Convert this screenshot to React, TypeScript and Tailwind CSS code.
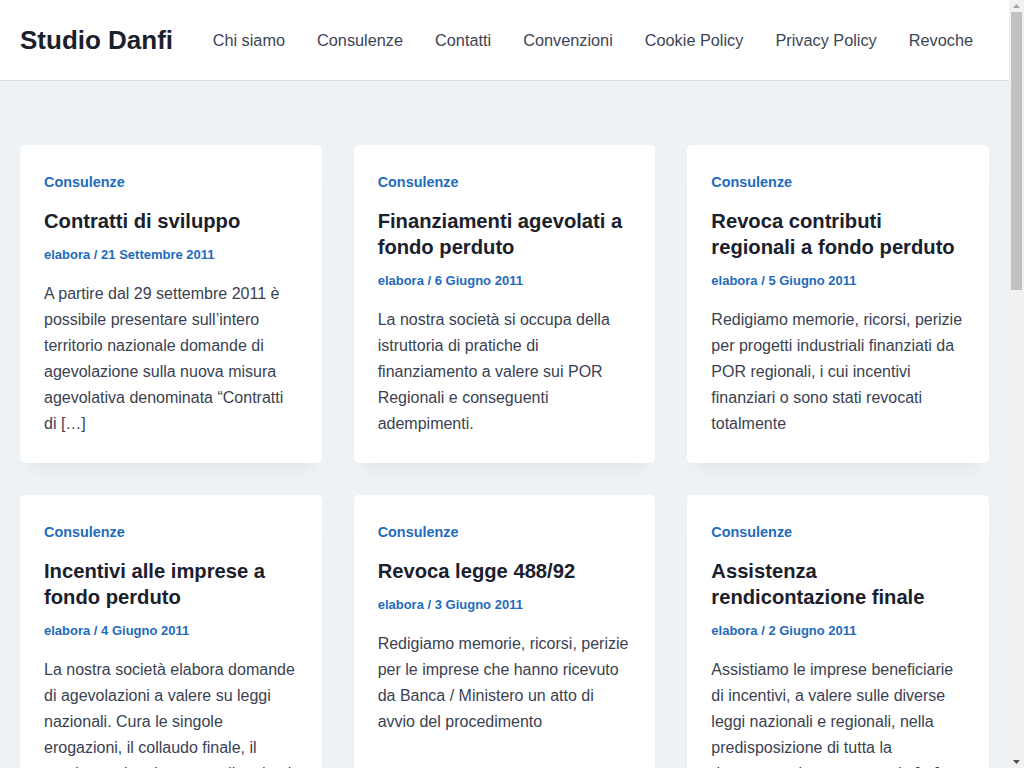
import React from 'react';

interface Post {
  title: string;
  date: string;
  excerpt: string;
}

const navItems = ['Chi siamo', 'Consulenze', 'Contatti', 'Convenzioni', 'Cookie Policy', 'Privacy Policy', 'Revoche'];

const posts: Post[] = [
  {
    title: 'Contratti di sviluppo',
    date: '21 Settembre 2011',
    excerpt:
      'A partire dal 29 settembre 2011 è possibile presentare sull’intero territorio nazionale domande di agevolazione sulla nuova misura agevolativa denominata “Contratti di […]',
  },
  {
    title: 'Finanziamenti agevolati a fondo perduto',
    date: '6 Giugno 2011',
    excerpt:
      'La nostra società si occupa della istruttoria di pratiche di finanziamento a valere sui POR Regionali e conseguenti adempimenti.',
  },
  {
    title: 'Revoca contributi regionali a fondo perduto',
    date: '5 Giugno 2011',
    excerpt:
      'Redigiamo memorie, ricorsi, perizie per progetti industriali finanziati da POR regionali, i cui incentivi finanziari o sono stati revocati totalmente',
  },
  {
    title: 'Incentivi alle imprese a fondo perduto',
    date: '4 Giugno 2011',
    excerpt:
      'La nostra società elabora domande di agevolazioni a valere su leggi nazionali. Cura le singole erogazioni, il collaudo finale, il monitoraggio e le eventuali varianti […]',
  },
  {
    title: 'Revoca legge 488/92',
    date: '3 Giugno 2011',
    excerpt:
      'Redigiamo memorie, ricorsi, perizie per le imprese che hanno ricevuto da Banca / Ministero un atto di avvio del procedimento',
  },
  {
    title: 'Assistenza rendicontazione finale',
    date: '2 Giugno 2011',
    excerpt:
      'Assistiamo le imprese beneficiarie di incentivi, a valere sulle diverse leggi nazionali e regionali, nella predisposizione di tutta la documentazione necessaria […]',
  },
];

const PostCard: React.FC<{ post: Post }> = ({ post }) => (
  <article className="bg-white rounded-[5px] shadow-[0_15px_15px_-10px_rgba(0,0,0,0.06)] px-6 pt-6 pb-[26px]">
    <a className="block text-[14.4px] leading-[26px] font-bold text-[#1f6bbd]">Consulenze</a>
    <h2 className="mt-[13px] text-[20.2px] leading-[26px] font-bold text-[#1a202c]">{post.title}</h2>
    <div className="mt-[10px] text-[13px] leading-[21px] font-bold text-[#1f6bbd]">
      elabora / {post.date}
    </div>
    <p className="mt-4 text-[16px] leading-[26px] text-[#3a4252]">{post.excerpt}</p>
  </article>
);

// browser scrollbar as seen in the screenshot
const ScrollBar: React.FC = () => (
  <div className="w-[15px] h-screen shrink-0 bg-[#f1f1f1] flex flex-col items-center">
    <div className="h-[12px] w-full flex items-center justify-center">
      <svg width="7" height="4" viewBox="0 0 7 4">
        <path d="M3.5 0 L7 4 L0 4 Z" fill="#a3a3a3" />
      </svg>
    </div>
    <div className="w-[11px] h-[278px] bg-[#c1c1c1]" />
    <div className="flex-1" />
    <div className="h-[12px] w-full flex items-center justify-center">
      <svg width="7" height="4" viewBox="0 0 7 4">
        <path d="M0 0 L7 0 L3.5 4 Z" fill="#505050" />
      </svg>
    </div>
  </div>
);

export default function App() {
  return (
    <div className="h-screen flex overflow-hidden bg-[#edf2f7] font-['Liberation_Sans',Arial,sans-serif]">
      <div className="flex-1 min-w-0 h-screen overflow-hidden">
        <header className="h-[81px] bg-white border-b border-[#d6dbe1] flex items-center justify-between pl-5 pr-5">
          <div className="text-[26px] font-bold text-[#1a202c]">Studio Danfi</div>
          <nav className="flex pt-px">
            {navItems.map((item) => (
              <a key={item} className="px-4 text-[16.3px] text-[#3d4454]">
                {item}
              </a>
            ))}
          </nav>
        </header>
        <main className="px-5 pt-16 pb-16">
          <div className="grid grid-cols-3 gap-8">
            {posts.map((p) => (
              <PostCard key={p.title} post={p} />
            ))}
          </div>
        </main>
      </div>
      <ScrollBar />
    </div>
  );
}
